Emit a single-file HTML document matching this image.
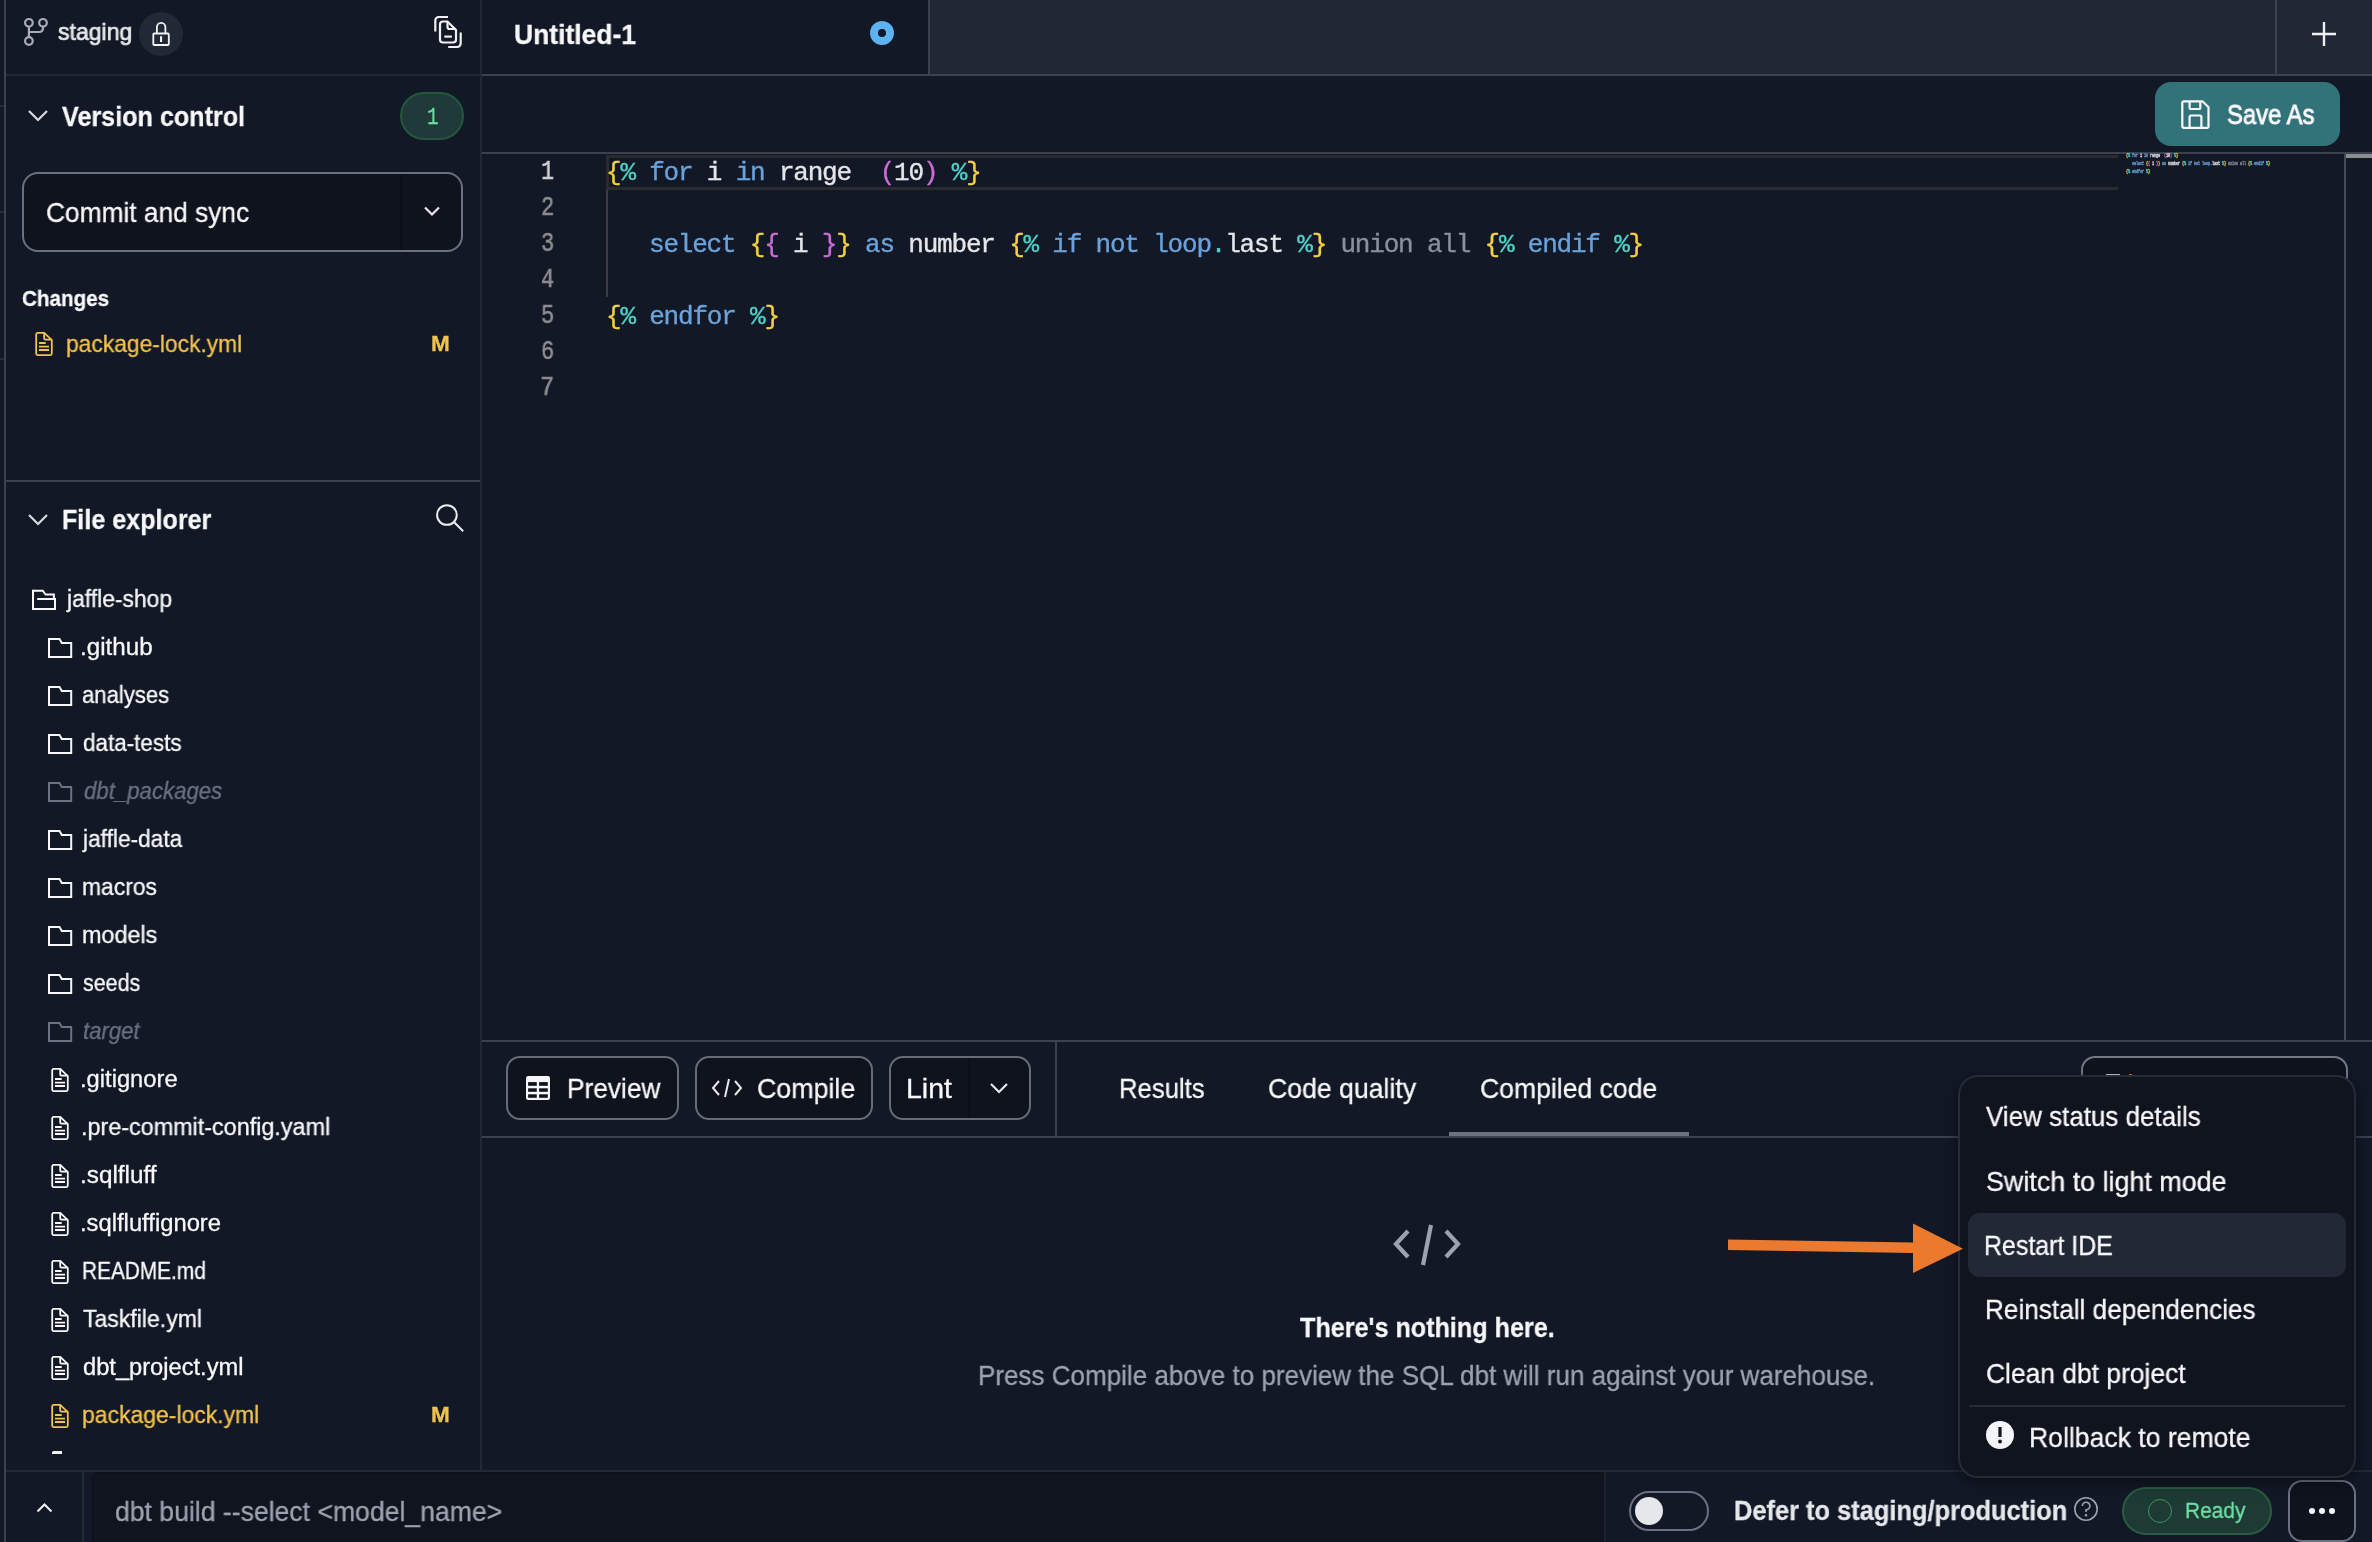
<!DOCTYPE html>
<html><head><meta charset="utf-8"><title>dbt IDE</title>
<style>
html,body{margin:0;padding:0;}
body{width:2372px;height:1542px;overflow:hidden;position:relative;background:#121826;font-family:'Liberation Sans',sans-serif;}
body>div,body>svg{position:absolute;}
.t{white-space:pre;line-height:1;transform-origin:0 0;will-change:transform;-webkit-text-stroke-width:0.3px;}
.code{white-space:pre;font-family:'Liberation Mono',monospace;font-size:26px;line-height:26px;letter-spacing:-1.2px;-webkit-text-stroke-width:0.35px;will-change:transform;}
.mm{transform:scale(0.1389,0.19);transform-origin:0 0;-webkit-text-stroke-width:2.5px;opacity:0.85}
</style></head><body>
<div style="left:4px;top:0px;width:2px;height:1542px;background:#3a414f"></div>
<div style="left:0px;top:105px;width:4px;height:2px;background:#262c39"></div>
<div style="left:0px;top:211px;width:4px;height:2px;background:#262c39"></div>
<div style="left:0px;top:358px;width:4px;height:2px;background:#262c39"></div>
<div style="left:480px;top:0px;width:2px;height:1471px;background:#212836"></div>
<div style="left:6px;top:74px;width:474px;height:2px;background:#222836"></div>
<div style="left:6px;top:480px;width:474px;height:2px;background:#3a414f"></div>
<svg style="left:22px;top:16px;" width="30" height="32" viewBox="0 0 30 32" fill="none"><g stroke="#a9adb8" stroke-width="2.2"><circle cx="6.9" cy="6.8" r="3.8"/><circle cx="21" cy="6.8" r="3.8"/><circle cx="6.9" cy="25" r="3.8"/><path d="M6.9 10.6V21.2M6.9 16H17.5A3.5 3.5 0 0 0 21 12.5V10.6"/></g></svg>
<div class="t" style="left:58.00px;top:19.68px;font-size:24px;color:#e6e7ea;font-family:'Liberation Sans', sans-serif;transform:scaleX(0.9600);-webkit-text-stroke-width:0.7px;">staging</div>
<div style="left:139px;top:12px;width:44px;height:44px;background:#212836;border-radius:50%"></div>
<svg style="left:146px;top:16px;" width="30" height="36" viewBox="0 0 30 36" fill="none"><g stroke="#f4f4f6" stroke-width="1.8" fill="none"><rect x="7.3" y="17.5" width="15.5" height="11.5" rx="1"/><path d="M10.9 17.5V11.15A4.25 4.25 0 0 1 19.4 11.15V17.5"/></g><rect x="14" y="20.2" width="2.1" height="5.8" fill="#f4f4f6"/></svg>
<svg style="left:430px;top:12px;" width="36" height="40" viewBox="0 0 36 40" fill="none"><g stroke="#f0f0f2" stroke-width="2.2" fill="none"><path d="M5.3 19.6V8.5A3.5 3.5 0 0 1 8.8 5H18"/><path d="M18.2 35H27.2A3.5 3.5 0 0 0 30.7 31.5V20.4"/><path d="M10 12.5A3 3 0 0 1 13 9.5H17.5L26 18V27.5A3 3 0 0 1 23 30.5H13A3 3 0 0 1 10 27.5Z"/><path d="M17.5 9.5V15A2 2 0 0 0 19.5 17H26"/><path d="M14.3 24.6H21.9"/></g></svg>
<svg style="left:27px;top:108px;" width="22" height="16" viewBox="0 0 22 16" fill="none"><path d="M2 3L11 12L20 3" stroke="#d8d9dd" stroke-width="2.2"/></svg>
<div class="t" style="left:61.50px;top:102.79px;font-size:28px;color:#f8f8fa;font-family:'Liberation Sans', sans-serif;font-weight:700;transform:scaleX(0.8983);">Version control</div>
<div style="left:400px;top:92px;width:64px;height:48px;background:#1f3a39;border:2px solid #24583e;border-radius:24px;box-sizing:border-box"></div>
<div class="t" style="left:426.67px;top:106.88px;font-size:23px;color:#6de3a4;font-family:'Liberation Mono', monospace;transform:scaleX(0.8333);">1</div>
<div style="left:22px;top:172px;width:441px;height:80px;background:#0f131e;border:2.5px solid #6b7080;border-radius:16px;box-sizing:border-box"></div>
<div style="left:400px;top:174.5px;width:1.5px;height:75px;background:#0b0e16"></div>
<div class="t" style="left:45.68px;top:197.87px;font-size:28.5px;color:#f8f8fa;font-family:'Liberation Sans', sans-serif;transform:scaleX(0.9228);">Commit and sync</div>
<svg style="left:423px;top:204px;" width="18" height="16" viewBox="0 0 18 16" fill="none"><path d="M2 3.5L9 10.5L16 3.5" stroke="#e8e8ea" stroke-width="2.2"/></svg>
<div class="t" style="left:22.30px;top:287.55px;font-size:22.5px;color:#f8f8fa;font-family:'Liberation Sans', sans-serif;font-weight:700;transform:scaleX(0.9174);">Changes</div>
<svg style="left:34px;top:330.2px;" width="20" height="28" viewBox="0 0 20 28" fill="none"><g stroke="#f1c24c" stroke-width="1.8" fill="none"><path d="M2.2 4.4A1.5 1.5 0 0 1 3.7 2.9H10.2L17.8 10.2V23.6A1.5 1.5 0 0 1 16.3 25.1H3.7A1.5 1.5 0 0 1 2.2 23.6Z"/><path d="M10.2 2.9V8.5A1.2 1.2 0 0 0 11.4 9.7H17.8"/><path d="M5 13H11.7M5 16.6H15M5 20H15"/></g></svg>
<div class="t" style="left:66.05px;top:332.08px;font-size:24px;color:#f1c24c;font-family:'Liberation Sans', sans-serif;transform:scaleX(0.9505);">package-lock.yml</div>
<div class="t" style="left:430.58px;top:333.17px;font-size:22px;color:#f1c24c;font-family:'Liberation Sans', sans-serif;font-weight:700;transform:scaleX(1.0250);">M</div>
<svg style="left:27px;top:512px;" width="22" height="16" viewBox="0 0 22 16" fill="none"><path d="M2 3L11 12L20 3" stroke="#d8d9dd" stroke-width="2.2"/></svg>
<div class="t" style="left:62.10px;top:506.29px;font-size:28px;color:#f8f8fa;font-family:'Liberation Sans', sans-serif;font-weight:700;transform:scaleX(0.8967);">File explorer</div>
<svg style="left:432px;top:501px;" width="34" height="34" viewBox="0 0 34 34" fill="none"><g stroke="#ececee" stroke-width="2"><circle cx="14.9" cy="14" r="9.85"/><path d="M21.9 21L31.2 30.2"/></g></svg>
<svg style="left:30px;top:588px;" width="28" height="24" viewBox="0 0 28 24" fill="none"><g stroke="#f8f8fa" stroke-width="2" fill="none"><path d="M3 2.7H12.8L15.6 6.5H23.9V10.5"/><path d="M3 1.7V21H25V11H7.2"/></g></svg>
<div class="t" style="left:66.97px;top:588.10px;font-size:23.5px;color:#f8f8fa;font-family:'Liberation Sans', sans-serif;transform:scaleX(0.9731);">jaffle-shop</div>
<svg style="left:47px;top:638px;" width="27" height="22" viewBox="0 0 27 22" fill="none"><path d="M2 1H12.5L14.8 5H24.2V19H2Z" stroke="#f8f8fa" stroke-width="2" fill="none"/></svg>
<div class="t" style="left:80.44px;top:636.10px;font-size:23.5px;color:#f8f8fa;font-family:'Liberation Sans', sans-serif;transform:scaleX(1.0294);">.github</div>
<svg style="left:47px;top:686px;" width="27" height="22" viewBox="0 0 27 22" fill="none"><path d="M2 1H12.5L14.8 5H24.2V19H2Z" stroke="#f8f8fa" stroke-width="2" fill="none"/></svg>
<div class="t" style="left:81.56px;top:684.10px;font-size:23.5px;color:#f8f8fa;font-family:'Liberation Sans', sans-serif;transform:scaleX(0.9396);">analyses</div>
<svg style="left:47px;top:734px;" width="27" height="22" viewBox="0 0 27 22" fill="none"><path d="M2 1H12.5L14.8 5H24.2V19H2Z" stroke="#f8f8fa" stroke-width="2" fill="none"/></svg>
<div class="t" style="left:82.50px;top:732.10px;font-size:23.5px;color:#f8f8fa;font-family:'Liberation Sans', sans-serif;transform:scaleX(0.9547);">data-tests</div>
<svg style="left:47px;top:782px;" width="27" height="22" viewBox="0 0 27 22" fill="none"><path d="M2 1H12.5L14.8 5H24.2V19H2Z" stroke="#6b7180" stroke-width="2" fill="none"/></svg>
<div class="t" style="left:84.00px;top:780.10px;font-size:23.5px;color:#6b7180;font-family:'Liberation Sans', sans-serif;font-style:italic;transform:scaleX(0.9442);">dbt_packages</div>
<svg style="left:47px;top:830px;" width="27" height="22" viewBox="0 0 27 22" fill="none"><path d="M2 1H12.5L14.8 5H24.2V19H2Z" stroke="#f8f8fa" stroke-width="2" fill="none"/></svg>
<div class="t" style="left:83.47px;top:828.10px;font-size:23.5px;color:#f8f8fa;font-family:'Liberation Sans', sans-serif;transform:scaleX(0.9655);">jaffle-data</div>
<svg style="left:47px;top:878px;" width="27" height="22" viewBox="0 0 27 22" fill="none"><path d="M2 1H12.5L14.8 5H24.2V19H2Z" stroke="#f8f8fa" stroke-width="2" fill="none"/></svg>
<div class="t" style="left:81.53px;top:876.10px;font-size:23.5px;color:#f8f8fa;font-family:'Liberation Sans', sans-serif;transform:scaleX(0.9722);">macros</div>
<svg style="left:47px;top:926px;" width="27" height="22" viewBox="0 0 27 22" fill="none"><path d="M2 1H12.5L14.8 5H24.2V19H2Z" stroke="#f8f8fa" stroke-width="2" fill="none"/></svg>
<div class="t" style="left:81.51px;top:924.10px;font-size:23.5px;color:#f8f8fa;font-family:'Liberation Sans', sans-serif;transform:scaleX(0.9932);">models</div>
<svg style="left:47px;top:974px;" width="27" height="22" viewBox="0 0 27 22" fill="none"><path d="M2 1H12.5L14.8 5H24.2V19H2Z" stroke="#f8f8fa" stroke-width="2" fill="none"/></svg>
<div class="t" style="left:82.50px;top:972.10px;font-size:23.5px;color:#f8f8fa;font-family:'Liberation Sans', sans-serif;transform:scaleX(0.9119);">seeds</div>
<svg style="left:47px;top:1022px;" width="27" height="22" viewBox="0 0 27 22" fill="none"><path d="M2 1H12.5L14.8 5H24.2V19H2Z" stroke="#6b7180" stroke-width="2" fill="none"/></svg>
<div class="t" style="left:83.06px;top:1020.10px;font-size:23.5px;color:#6b7180;font-family:'Liberation Sans', sans-serif;font-style:italic;transform:scaleX(0.9412);">target</div>
<svg style="left:50px;top:1066px;" width="20" height="28" viewBox="0 0 20 28" fill="none"><g stroke="#f8f8fa" stroke-width="1.8" fill="none"><path d="M2.2 4.4A1.5 1.5 0 0 1 3.7 2.9H10.2L17.8 10.2V23.6A1.5 1.5 0 0 1 16.3 25.1H3.7A1.5 1.5 0 0 1 2.2 23.6Z"/><path d="M10.2 2.9V8.5A1.2 1.2 0 0 0 11.4 9.7H17.8"/><path d="M5 13H11.7M5 16.6H15M5 20H15"/></g></svg>
<div class="t" style="left:80.48px;top:1068.10px;font-size:23.5px;color:#f8f8fa;font-family:'Liberation Sans', sans-serif;transform:scaleX(1.0095);">.gitignore</div>
<svg style="left:50px;top:1114px;" width="20" height="28" viewBox="0 0 20 28" fill="none"><g stroke="#f8f8fa" stroke-width="1.8" fill="none"><path d="M2.2 4.4A1.5 1.5 0 0 1 3.7 2.9H10.2L17.8 10.2V23.6A1.5 1.5 0 0 1 16.3 25.1H3.7A1.5 1.5 0 0 1 2.2 23.6Z"/><path d="M10.2 2.9V8.5A1.2 1.2 0 0 0 11.4 9.7H17.8"/><path d="M5 13H11.7M5 16.6H15M5 20H15"/></g></svg>
<div class="t" style="left:80.51px;top:1116.10px;font-size:23.5px;color:#f8f8fa;font-family:'Liberation Sans', sans-serif;transform:scaleX(0.9939);">.pre-commit-config.yaml</div>
<svg style="left:50px;top:1162px;" width="20" height="28" viewBox="0 0 20 28" fill="none"><g stroke="#f8f8fa" stroke-width="1.8" fill="none"><path d="M2.2 4.4A1.5 1.5 0 0 1 3.7 2.9H10.2L17.8 10.2V23.6A1.5 1.5 0 0 1 16.3 25.1H3.7A1.5 1.5 0 0 1 2.2 23.6Z"/><path d="M10.2 2.9V8.5A1.2 1.2 0 0 0 11.4 9.7H17.8"/><path d="M5 13H11.7M5 16.6H15M5 20H15"/></g></svg>
<div class="t" style="left:80.43px;top:1164.10px;font-size:23.5px;color:#f8f8fa;font-family:'Liberation Sans', sans-serif;transform:scaleX(1.0332);">.sqlfluff</div>
<svg style="left:50px;top:1210px;" width="20" height="28" viewBox="0 0 20 28" fill="none"><g stroke="#f8f8fa" stroke-width="1.8" fill="none"><path d="M2.2 4.4A1.5 1.5 0 0 1 3.7 2.9H10.2L17.8 10.2V23.6A1.5 1.5 0 0 1 16.3 25.1H3.7A1.5 1.5 0 0 1 2.2 23.6Z"/><path d="M10.2 2.9V8.5A1.2 1.2 0 0 0 11.4 9.7H17.8"/><path d="M5 13H11.7M5 16.6H15M5 20H15"/></g></svg>
<div class="t" style="left:80.48px;top:1212.10px;font-size:23.5px;color:#f8f8fa;font-family:'Liberation Sans', sans-serif;transform:scaleX(1.0118);">.sqlfluffignore</div>
<svg style="left:50px;top:1258px;" width="20" height="28" viewBox="0 0 20 28" fill="none"><g stroke="#f8f8fa" stroke-width="1.8" fill="none"><path d="M2.2 4.4A1.5 1.5 0 0 1 3.7 2.9H10.2L17.8 10.2V23.6A1.5 1.5 0 0 1 16.3 25.1H3.7A1.5 1.5 0 0 1 2.2 23.6Z"/><path d="M10.2 2.9V8.5A1.2 1.2 0 0 0 11.4 9.7H17.8"/><path d="M5 13H11.7M5 16.6H15M5 20H15"/></g></svg>
<div class="t" style="left:81.61px;top:1260.10px;font-size:23.5px;color:#f8f8fa;font-family:'Liberation Sans', sans-serif;transform:scaleX(0.8863);">README.md</div>
<svg style="left:50px;top:1306px;" width="20" height="28" viewBox="0 0 20 28" fill="none"><g stroke="#f8f8fa" stroke-width="1.8" fill="none"><path d="M2.2 4.4A1.5 1.5 0 0 1 3.7 2.9H10.2L17.8 10.2V23.6A1.5 1.5 0 0 1 16.3 25.1H3.7A1.5 1.5 0 0 1 2.2 23.6Z"/><path d="M10.2 2.9V8.5A1.2 1.2 0 0 0 11.4 9.7H17.8"/><path d="M5 13H11.7M5 16.6H15M5 20H15"/></g></svg>
<div class="t" style="left:82.50px;top:1308.10px;font-size:23.5px;color:#f8f8fa;font-family:'Liberation Sans', sans-serif;transform:scaleX(0.9799);">Taskfile.yml</div>
<svg style="left:50px;top:1354px;" width="20" height="28" viewBox="0 0 20 28" fill="none"><g stroke="#f8f8fa" stroke-width="1.8" fill="none"><path d="M2.2 4.4A1.5 1.5 0 0 1 3.7 2.9H10.2L17.8 10.2V23.6A1.5 1.5 0 0 1 16.3 25.1H3.7A1.5 1.5 0 0 1 2.2 23.6Z"/><path d="M10.2 2.9V8.5A1.2 1.2 0 0 0 11.4 9.7H17.8"/><path d="M5 13H11.7M5 16.6H15M5 20H15"/></g></svg>
<div class="t" style="left:82.50px;top:1356.10px;font-size:23.5px;color:#f8f8fa;font-family:'Liberation Sans', sans-serif;transform:scaleX(1.0068);">dbt_project.yml</div>
<svg style="left:50px;top:1402px;" width="20" height="28" viewBox="0 0 20 28" fill="none"><g stroke="#f1c24c" stroke-width="1.8" fill="none"><path d="M2.2 4.4A1.5 1.5 0 0 1 3.7 2.9H10.2L17.8 10.2V23.6A1.5 1.5 0 0 1 16.3 25.1H3.7A1.5 1.5 0 0 1 2.2 23.6Z"/><path d="M10.2 2.9V8.5A1.2 1.2 0 0 0 11.4 9.7H17.8"/><path d="M5 13H11.7M5 16.6H15M5 20H15"/></g></svg>
<div class="t" style="left:81.52px;top:1404.10px;font-size:23.5px;color:#f1c24c;font-family:'Liberation Sans', sans-serif;transform:scaleX(0.9765);">package-lock.yml</div>
<div class="t" style="left:430.58px;top:1404.37px;font-size:22px;color:#f1c24c;font-family:'Liberation Sans', sans-serif;font-weight:700;transform:scaleX(1.0250);">M</div>
<div style="left:51.5px;top:1451px;width:10px;height:2.5px;background:#f0f0f2;border-radius:1.5px 0 0 0"></div>
<div style="left:930px;top:0px;width:1345px;height:74px;background:#212735"></div>
<div style="left:2277px;top:0px;width:95px;height:74px;background:#212735"></div>
<div style="left:928px;top:0px;width:2px;height:74px;background:#3a414f"></div>
<div style="left:2275px;top:0px;width:2px;height:74px;background:#3a414f"></div>
<div style="left:482px;top:74px;width:1890px;height:2px;background:#3a414f"></div>
<div class="t" style="left:514.06px;top:20.69px;font-size:28px;color:#f8f8fa;font-family:'Liberation Sans', sans-serif;font-weight:700;transform:scaleX(0.9449);">Untitled-1</div>
<div style="left:870px;top:21px;width:24px;height:24px;background:#5cb3ef;border-radius:50%"></div>
<div style="left:878px;top:29px;width:8px;height:8px;background:#121826;border-radius:50%"></div>
<svg style="left:2310px;top:20px;" width="28" height="28" viewBox="0 0 28 28" fill="none"><path d="M14 2V26M2 14H26" stroke="#f0f0f2" stroke-width="2.4"/></svg>
<div style="left:482px;top:152px;width:1890px;height:2px;background:#3a414f"></div>
<div style="left:2155px;top:82px;width:185px;height:64px;background:#32737a;border-radius:16px"></div>
<svg style="left:2179px;top:98px;" width="32" height="32" viewBox="0 0 32 32" fill="none"><g stroke="#f8f8fa" stroke-width="2.2" fill="none"><path d="M3.3 4.8A1.5 1.5 0 0 1 4.8 3.3H23.5L29.5 9.3V28.4A1.5 1.5 0 0 1 28 29.9H4.8A1.5 1.5 0 0 1 3.3 28.4Z"/><path d="M10.6 3.3V9.5A1.5 1.5 0 0 0 12.1 11H19.8A1.5 1.5 0 0 0 21.3 9.5V3.3"/><path d="M10.6 29.9V19A1.5 1.5 0 0 1 12.1 17.5H20.9A1.5 1.5 0 0 1 22.4 19V29.9"/></g></svg>
<div class="t" style="left:2227.12px;top:102.14px;font-size:27px;color:#f8f8fa;font-family:'Liberation Sans', sans-serif;transform:scaleX(0.8834);-webkit-text-stroke-width:0.9px;">Save As</div>
<div style="left:606px;top:155px;width:1512px;height:35px;border:3.5px solid #2a2b2d;border-right:none;box-sizing:border-box"></div>
<div style="left:606px;top:190px;width:2px;height:107px;background:#3d3d3f"></div>
<div class="t" style="left:540.59px;top:159.32px;font-size:27px;color:#cfcfd1;font-family:'Liberation Mono', monospace;transform:scaleX(0.8143);-webkit-text-stroke-width:0.6px;">1</div>
<div class="t" style="left:540.59px;top:195.32px;font-size:27px;color:#8c8c8e;font-family:'Liberation Mono', monospace;transform:scaleX(0.8143);-webkit-text-stroke-width:0.6px;">2</div>
<div class="t" style="left:540.59px;top:231.32px;font-size:27px;color:#8c8c8e;font-family:'Liberation Mono', monospace;transform:scaleX(0.8143);-webkit-text-stroke-width:0.6px;">3</div>
<div class="t" style="left:540.59px;top:267.32px;font-size:27px;color:#8c8c8e;font-family:'Liberation Mono', monospace;transform:scaleX(0.8143);-webkit-text-stroke-width:0.6px;">4</div>
<div class="t" style="left:540.59px;top:303.32px;font-size:27px;color:#8c8c8e;font-family:'Liberation Mono', monospace;transform:scaleX(0.8143);-webkit-text-stroke-width:0.6px;">5</div>
<div class="t" style="left:540.59px;top:339.32px;font-size:27px;color:#8c8c8e;font-family:'Liberation Mono', monospace;transform:scaleX(0.8143);-webkit-text-stroke-width:0.6px;">6</div>
<div class="t" style="left:539.65px;top:375.32px;font-size:27px;color:#8c8c8e;font-family:'Liberation Mono', monospace;transform:scaleX(0.8769);-webkit-text-stroke-width:0.6px;">7</div>
<div class="code" style="left:606.0px;top:160.08px"><span style="color:#f5d142">{</span><span style="color:#4fd1c5">%</span> <span style="color:#6aa2dc">for</span> <span style="color:#e6e6ea">i</span> <span style="color:#6aa2dc">in</span> <span style="color:#e6e6ea">range</span>  <span style="color:#cc6dd6">(</span><span style="color:#e6e6ea">10</span><span style="color:#cc6dd6">)</span> <span style="color:#4fd1c5">%</span><span style="color:#f5d142">}</span></div>
<div class="code" style="left:649.2px;top:232.08px"><span style="color:#6aa2dc">select</span> <span style="color:#f5d142">{</span><span style="color:#cc6dd6">{</span> <span style="color:#e6e6ea">i</span> <span style="color:#cc6dd6">}</span><span style="color:#f5d142">}</span> <span style="color:#6aa2dc">as</span> <span style="color:#e6e6ea">number</span> <span style="color:#f5d142">{</span><span style="color:#4fd1c5">%</span> <span style="color:#6aa2dc">if</span> <span style="color:#6aa2dc">not</span> <span style="color:#6aa2dc">loop</span><span style="color:#4fd1c5">.</span><span style="color:#e6e6ea">last</span> <span style="color:#4fd1c5">%</span><span style="color:#f5d142">}</span> <span style="color:#8b919b">union</span> <span style="color:#8b919b">all</span> <span style="color:#f5d142">{</span><span style="color:#4fd1c5">%</span> <span style="color:#6aa2dc">endif</span> <span style="color:#4fd1c5">%</span><span style="color:#f5d142">}</span></div>
<div class="code" style="left:606.0px;top:304.08px"><span style="color:#f5d142">{</span><span style="color:#4fd1c5">%</span> <span style="color:#6aa2dc">endfor</span> <span style="color:#4fd1c5">%</span><span style="color:#f5d142">}</span></div>
<div class="code mm" style="left:2125.5px;top:153.3px"><span style="color:#f5d142">{</span><span style="color:#4fd1c5">%</span> <span style="color:#6aa2dc">for</span> <span style="color:#e6e6ea">i</span> <span style="color:#6aa2dc">in</span> <span style="color:#e6e6ea">range</span>  <span style="color:#cc6dd6">(</span><span style="color:#e6e6ea">10</span><span style="color:#cc6dd6">)</span> <span style="color:#4fd1c5">%</span><span style="color:#f5d142">}</span></div>
<div class="code mm" style="left:2131.5px;top:161.3px"><span style="color:#6aa2dc">select</span> <span style="color:#f5d142">{</span><span style="color:#cc6dd6">{</span> <span style="color:#e6e6ea">i</span> <span style="color:#cc6dd6">}</span><span style="color:#f5d142">}</span> <span style="color:#6aa2dc">as</span> <span style="color:#e6e6ea">number</span> <span style="color:#f5d142">{</span><span style="color:#4fd1c5">%</span> <span style="color:#6aa2dc">if</span> <span style="color:#6aa2dc">not</span> <span style="color:#6aa2dc">loop</span><span style="color:#4fd1c5">.</span><span style="color:#e6e6ea">last</span> <span style="color:#4fd1c5">%</span><span style="color:#f5d142">}</span> <span style="color:#8b919b">union</span> <span style="color:#8b919b">all</span> <span style="color:#f5d142">{</span><span style="color:#4fd1c5">%</span> <span style="color:#6aa2dc">endif</span> <span style="color:#4fd1c5">%</span><span style="color:#f5d142">}</span></div>
<div class="code mm" style="left:2125.5px;top:169.3px"><span style="color:#f5d142">{</span><span style="color:#4fd1c5">%</span> <span style="color:#6aa2dc">endfor</span> <span style="color:#4fd1c5">%</span><span style="color:#f5d142">}</span></div>
<div style="left:2344px;top:154px;width:2px;height:886px;background:#454a55"></div>
<div style="left:2346px;top:154px;width:26px;height:4px;background:#8d8d8f"></div>
<div style="left:482px;top:1040px;width:1890px;height:2px;background:#3a414f"></div>
<div style="left:482px;top:1136px;width:1890px;height:2px;background:#3a414f"></div>
<div style="left:1055px;top:1042px;width:2px;height:94px;background:#3a414f"></div>
<div style="left:506px;top:1056px;width:173px;height:64px;border:2px solid #666c78;border-radius:14px;box-sizing:border-box;background:#0f131e"></div>
<div style="left:695px;top:1056px;width:178px;height:64px;border:2px solid #666c78;border-radius:14px;box-sizing:border-box;background:#0f131e"></div>
<div style="left:889px;top:1056px;width:142px;height:64px;border:2px solid #666c78;border-radius:14px;box-sizing:border-box;background:#0f131e"></div>
<div style="left:968px;top:1058px;width:1.5px;height:60px;background:#0b0e16"></div>
<svg style="left:526px;top:1076px;" width="24" height="24" viewBox="0 0 24 24" fill="none"><rect x="0" y="0" width="24" height="24" rx="2.2" fill="#f6f6f8"/><g fill="#0f131e"><rect x="2.1" y="6.1" width="8.7" height="3.7"/><rect x="13.1" y="6.1" width="8.7" height="3.7"/><rect x="2.1" y="12.3" width="8.7" height="3.5"/><rect x="13.1" y="12.3" width="8.7" height="3.5"/><rect x="2.1" y="18.3" width="8.7" height="3.5"/><rect x="13.1" y="18.3" width="8.7" height="3.5"/></g></svg>
<div class="t" style="left:567.16px;top:1074.37px;font-size:28.5px;color:#f8f8fa;font-family:'Liberation Sans', sans-serif;transform:scaleX(0.9220);">Preview</div>
<svg style="left:711px;top:1078px;" width="32" height="20" viewBox="0 0 32 20" fill="none"><g stroke="#e8e8ea" stroke-width="2" fill="none"><path d="M8 3L2 10L8 17"/><path d="M24 3L30 10L24 17"/><path d="M18 1L14 19"/></g></svg>
<div class="t" style="left:757.06px;top:1074.37px;font-size:28.5px;color:#f8f8fa;font-family:'Liberation Sans', sans-serif;transform:scaleX(0.9398);">Compile</div>
<div class="t" style="left:906.01px;top:1074.37px;font-size:28.5px;color:#f8f8fa;font-family:'Liberation Sans', sans-serif;transform:scaleX(0.9947);">Lint</div>
<svg style="left:989px;top:1081px;" width="20" height="14" viewBox="0 0 20 14" fill="none"><path d="M2 3L10 11L18 3" stroke="#e8e8ea" stroke-width="2.2"/></svg>
<div class="t" style="left:1119.00px;top:1074.47px;font-size:28.5px;color:#f8f8fa;font-family:'Liberation Sans', sans-serif;transform:scaleX(0.9010);">Results</div>
<div class="t" style="left:1268.07px;top:1074.47px;font-size:28.5px;color:#f8f8fa;font-family:'Liberation Sans', sans-serif;transform:scaleX(0.9344);">Code quality</div>
<div class="t" style="left:1480.07px;top:1074.47px;font-size:28.5px;color:#f8f8fa;font-family:'Liberation Sans', sans-serif;transform:scaleX(0.9322);">Compiled code</div>
<div style="left:1449px;top:1132px;width:240px;height:4px;background:#6b7280"></div>
<div style="left:2081px;top:1056px;width:267px;height:64px;border:2px solid #737985;border-radius:14px;box-sizing:border-box;background:#0f131e"></div>
<div style="left:2106px;top:1074px;width:14px;height:3px;background:#c8c8cc"></div>
<div style="left:2129px;top:1074px;width:3px;height:3px;background:#e8663a"></div>
<svg style="left:1392px;top:1222px;" width="70" height="46" viewBox="0 0 70 46" fill="none"><g stroke="#9ca3af" stroke-width="4.2" fill="none"><path d="M16 5L4 18L16 31" transform="translate(0,4)"/><path d="M54 9L66 22L54 35"/><path d="M39 3L31 43"/></g></svg>
<div class="t" style="left:1300.00px;top:1313.17px;font-size:28.5px;color:#f8f8fa;font-family:'Liberation Sans', sans-serif;font-weight:700;transform:scaleX(0.8824);">There&#x27;s nothing here.</div>
<div class="t" style="left:977.67px;top:1361.37px;font-size:28.5px;color:#9ca3af;font-family:'Liberation Sans', sans-serif;transform:scaleX(0.9129);">Press Compile above to preview the SQL dbt will run against your warehouse.</div>
<div style="left:6px;top:1470px;width:2366px;height:2px;background:#232a37"></div>
<div style="left:82px;top:1472px;width:2px;height:70px;background:#232a37"></div>
<div style="left:92px;top:1472px;width:1512px;height:80px;border-left:1.5px solid #0c1019;border-top:1px solid #0c1019;border-top-left-radius:7px;background:#10141f;box-sizing:border-box"></div>
<svg style="left:34px;top:1499px;" width="22" height="16" viewBox="0 0 22 16" fill="none"><path d="M3.5 12.5L10.5 5.5L17.5 12.5" stroke="#f0f0f2" stroke-width="2"/></svg>
<div class="t" style="left:115.43px;top:1497.62px;font-size:27.5px;color:#9ca3af;font-family:'Liberation Sans', sans-serif;transform:scaleX(0.9667);">dbt build --select &lt;model_name&gt;</div>
<div style="left:1604px;top:1472px;width:2px;height:70px;background:#1c222e"></div>
<div style="left:1629px;top:1491px;width:80px;height:40px;border:2px solid #6b7080;border-radius:20px;box-sizing:border-box"></div>
<div style="left:1635px;top:1497px;width:28px;height:28px;background:#e5e7eb;border-radius:50%"></div>
<div class="t" style="left:1733.56px;top:1497.74px;font-size:27px;color:#e5e7eb;font-family:'Liberation Sans', sans-serif;font-weight:700;transform:scaleX(0.9414);">Defer to staging/production</div>
<svg style="left:2073px;top:1496px;" width="26" height="26" viewBox="0 0 26 26" fill="none"><circle cx="13" cy="13" r="11.2" stroke="#9ca3af" stroke-width="1.6"/><path d="M9.3 10A3.8 3.8 0 1 1 13 13.8V16" stroke="#9ca3af" stroke-width="1.6" fill="none"/><circle cx="13" cy="19.3" r="1.2" fill="#9ca3af"/></svg>
<div style="left:2122px;top:1487px;width:150px;height:48px;background:#1d3a34;border:2px solid #2a5b41;border-radius:24px;box-sizing:border-box"></div>
<div style="left:2148px;top:1499px;width:24px;height:24px;border:1.6px solid #3b9163;border-radius:50%;box-sizing:border-box"></div>
<div class="t" style="left:2184.67px;top:1499.83px;font-size:22.4px;color:#6ee0a5;font-family:'Liberation Sans', sans-serif;transform:scaleX(0.9345);">Ready</div>
<div style="left:2288px;top:1480px;width:68px;height:61.5px;border:2px solid #6b7080;border-radius:14px;box-sizing:border-box;background:#0f131e"></div>
<div style="left:2308.8px;top:1507.5px;width:6.4px;height:6.4px;background:#f8f8fa;border-radius:50%"></div>
<div style="left:2318.8px;top:1507.5px;width:6.4px;height:6.4px;background:#f8f8fa;border-radius:50%"></div>
<div style="left:2328.8px;top:1507.5px;width:6.4px;height:6.4px;background:#f8f8fa;border-radius:50%"></div>
<div style="left:1958px;top:1075px;width:398px;height:403px;background:#10141f;border:2px solid #252b38;border-radius:20px;box-sizing:border-box;box-shadow:0 4px 14px rgba(0,0,0,0.45)"></div>
<div style="left:1968px;top:1213px;width:378px;height:64px;background:#222836;border-radius:12px"></div>
<div class="t" style="left:1986.00px;top:1103.12px;font-size:27.5px;color:#f8f8fa;font-family:'Liberation Sans', sans-serif;transform:scaleX(0.9448);">View status details</div>
<div class="t" style="left:1985.72px;top:1167.72px;font-size:27.5px;color:#f8f8fa;font-family:'Liberation Sans', sans-serif;transform:scaleX(0.9775);">Switch to light mode</div>
<div class="t" style="left:1984.19px;top:1232.02px;font-size:27.5px;color:#f8f8fa;font-family:'Liberation Sans', sans-serif;transform:scaleX(0.9064);">Restart IDE</div>
<div class="t" style="left:1985.10px;top:1295.52px;font-size:27.5px;color:#f8f8fa;font-family:'Liberation Sans', sans-serif;transform:scaleX(0.9517);">Reinstall dependencies</div>
<div class="t" style="left:1986.04px;top:1359.72px;font-size:27.5px;color:#f8f8fa;font-family:'Liberation Sans', sans-serif;transform:scaleX(0.9601);">Clean dbt project</div>
<div style="left:1969px;top:1405px;width:376px;height:2px;background:#252b38"></div>
<svg style="left:1985px;top:1420px;" width="30" height="30" viewBox="0 0 30 30" fill="none"><circle cx="15" cy="15" r="14" fill="#f4f5f8"/><path d="M15 7V17" stroke="#10141f" stroke-width="3.2"/><circle cx="15" cy="21.5" r="1.9" fill="#10141f"/></svg>
<div class="t" style="left:2028.77px;top:1423.52px;font-size:27.5px;color:#f8f8fa;font-family:'Liberation Sans', sans-serif;transform:scaleX(0.9662);">Rollback to remote</div>
<svg style="left:1720px;top:1215px;" width="250" height="65" viewBox="0 0 250 65" fill="none"><path d="M8 24.5L193 27.5L193 8.5L243 33.8L193 58L193 38L8 35Z" fill="#eb7a2f"/></svg>
</body></html>
